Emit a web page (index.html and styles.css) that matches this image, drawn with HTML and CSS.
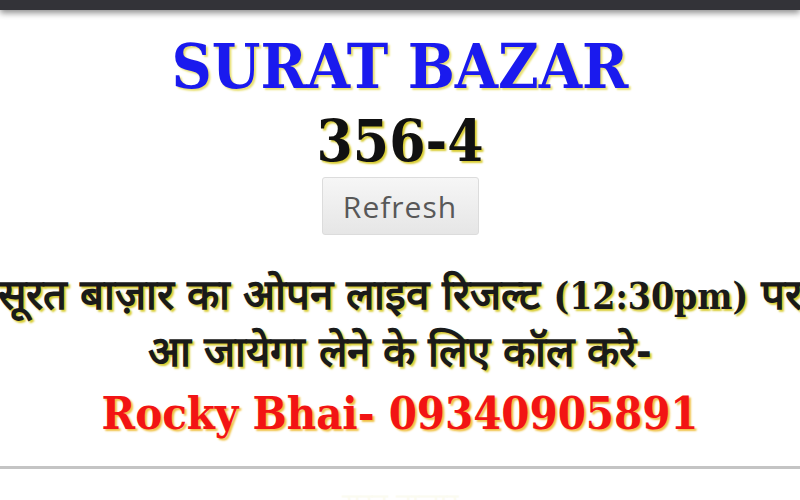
FILE: index.html
```html
<!DOCTYPE html>
<html lang="hi">
<head>
<meta charset="utf-8">
<title>SURAT BAZAR</title>
<link rel="stylesheet" href="styles.css">
</head>
<body>
<div class="topbar"></div>
<main class="page">
  <h1 class="title">SURAT BAZAR</h1>
  <div class="result">356-4</div>
  <button class="refresh" type="button">Refresh</button>
  <p class="notice">सूरत बाज़ार का ओपन लाइव रिजल्ट <span class="latin">(12:30pm)</span> पर<br>आ जायेगा लेने के लिए कॉल करे-</p>
  <p class="contact">Rocky Bhai- 09340905891</p>
  <hr class="divider">
  <p class="faint">सूरत बाज़ार</p>
</main>
</body>
</html>
```
FILE: styles.css
```css
html, body {
  margin: 0;
  padding: 0;
  background: #ffffff;
  overflow: hidden;
}
body {
  width: 800px;
  height: 500px;
  font-family: "DejaVu Serif Condensed", "DejaVu Serif", serif;
  font-stretch: condensed;
}
.topbar {
  height: 10px;
  background: #333338;
  box-shadow: 0 3px 6px rgba(0,0,0,0.45);
}
.page {
  display: flex;
  flex-direction: column;
  align-items: center;
  text-align: center;
}
.title {
  margin: 24px 0 0;
  font-size: 62px;
  line-height: 66px;
  font-weight: bold;
  color: #1a1aee;
  text-shadow: 2px 2px 2px #e8e070;
  white-space: nowrap;
}
.result {
  margin-top: 8px;
  font-size: 58px;
  line-height: 66px;
  font-weight: bold;
  color: #111;
  text-shadow: 2px 2px 2px #d8cc30;
}
.refresh {
  margin-top: 3px;
  width: 157px;
  height: 58px;
  border: 1px solid #dcdcdc;
  border-radius: 3px;
  background: linear-gradient(#f6f6f6, #e6e6e6);
  color: #585858;
  font-family: "Open Sans", "Noto Sans", sans-serif;
  font-stretch: normal;
  font-size: 30px;
  letter-spacing: 1px;
  padding: 0;
}
.notice {
  margin: 32px 0 0;
  font-size: 42px;
  line-height: 56px;
  font-weight: bold;
  color: #1a1a1a;
  white-space: nowrap;
  text-shadow: 2px 2px 2px #d8cc30;
}
.latin {
  font-size: 37px;
}
.contact {
  margin: 4px 0 0;
  font-size: 45px;
  line-height: 60px;
  font-weight: bold;
  color: #f21414;
  text-shadow: 2px 2px 2px #f0c040;
  white-space: nowrap;
}
.divider {
  align-self: stretch;
  margin: 22px 0 0;
  height: 3px;
  border: 0;
  background: #c4c4c4;
}
.faint {
  margin: 14px 0 0;
  font-size: 28px;
  color: #fbfbf0;
}
```
